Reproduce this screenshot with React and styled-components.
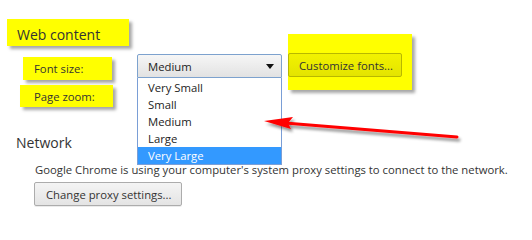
import React from "react";
import styled, { createGlobalStyle } from "styled-components";

const Global = createGlobalStyle`
  html, body { margin: 0; padding: 0; background: #fff; }
  body { font-family: "Open Sans", "Noto Sans", sans-serif; color: #303030; }
`;

const Page = styled.div`
  position: relative;
  width: 532px;
  height: 223px;
  overflow: hidden;
  padding-top: 19px;
  box-sizing: border-box;
`;

const Highlight = styled.div`
  background: #ffff00;
  box-shadow: 3px 3px 3px rgba(0, 0, 0, 0.35);
  box-sizing: border-box;
`;

const TitleBox = styled(Highlight)`
  margin-left: 7px;
  width: 122px;
  height: 27px;
  display: flex;
  align-items: center;
  padding: 3px 0 0 10px;
  font-size: 14px;
  color: #333;
`;

const Row = styled.div`
  display: flex;
  align-items: flex-start;
  height: ${(p) => p.$h}px;
  margin-top: ${(p) => p.$mt || 0}px;
`;

const LabelBox = styled(Highlight)`
  margin-left: ${(p) => p.$ml}px;
  margin-top: ${(p) => p.$mt || 0}px;
  width: ${(p) => p.$w}px;
  height: ${(p) => p.$h}px;
  padding-left: ${(p) => p.$pl}px;
  display: flex;
  align-items: center;
  font-size: 11.3px;
  color: #333;
`;

const SelectWrap = styled.div`
  position: relative;
  margin-left: ${(p) => p.$ml}px;
  width: 145px;
`;

const Select = styled.div`
  height: 24px;
  box-sizing: border-box;
  border: 1px solid #7da2ce;
  border-radius: 2px 2px 0 0;
  background: linear-gradient(#f6f6f6, #e2e2e2);
  display: flex;
  align-items: center;
  justify-content: space-between;
  padding: 0 7px 0 10px;
  font-size: 11.3px;
  color: #222;
`;

const Caret = styled.span`
  width: 0;
  height: 0;
  border-left: 4px solid transparent;
  border-right: 4px solid transparent;
  border-top: 5px solid #111;
`;

const List = styled.ul`
  position: absolute;
  left: 0;
  top: 24px;
  width: 145px;
  box-sizing: border-box;
  margin: 0;
  padding: 0;
  list-style: none;
  background: #fff;
  border: 1px solid #7a9ed6;
  border-top: none;
  z-index: 2;
`;

const Item = styled.li`
  height: 17px;
  line-height: 17px;
  padding-left: 10px;
  font-size: 11.3px;
  color: ${(p) => (p.$active ? "#fff" : "#222")};
  background: ${(p) => (p.$active ? "#3399ff" : "transparent")};
  margin-top: ${(p) => (p.$first ? 1 : 0)}px;
`;

const CustomizeBox = styled(Highlight)`
  margin-left: 6px;
  margin-top: -20px;
  width: 124px;
  height: 56px;
  padding-top: 19px;
`;

const YellowButton = styled.div`
  width: 114px;
  height: 24px;
  box-sizing: border-box;
  border: 1px solid #b8b800;
  border-radius: 2px;
  background: linear-gradient(#f2f200, #e4e400);
  display: flex;
  align-items: center;
  padding-left: 10px;
  font-size: 11.3px;
  color: #333;
`;

const SectionTitle = styled.div`
  margin: 27px 0 0 16px;
  font-size: 14px;
  line-height: 18px;
  color: #333;
`;

const Description = styled.div`
  margin: 10px 0 0 35px;
  font-size: 11.3px;
  line-height: 16px;
  white-space: nowrap;
  color: #333;
`;

const Button = styled.div`
  margin: 4px 0 0 34px;
  width: 148px;
  height: 24px;
  box-sizing: border-box;
  border: 1px solid #acacac;
  border-radius: 2px;
  background: linear-gradient(#f4f4f4, #e4e4e4);
  box-shadow: 0 1px 0 rgba(0, 0, 0, 0.08);
  display: flex;
  align-items: center;
  padding-left: 11px;
  font-size: 11.3px;
  color: #333;
`;

const ArrowSvg = styled.svg`
  position: absolute;
  left: 255px;
  top: 108px;
  z-index: 3;
  overflow: visible;
`;

const options = ["Very Small", "Small", "Medium", "Large", "Very Large"];

export default function App() {
  return (
    <>
      <Global />
      <Page>
        <TitleBox>Web content</TitleBox>
        <Row $h={31} $mt={8}>
          <LabelBox $ml={23} $mt={3} $w={89} $h={23} $pl={11}>
            Font size:
          </LabelBox>
          <SelectWrap $ml={25}>
            <Select>
              Medium
              <Caret />
            </Select>
            <List>
              {options.map((o, i) => (
                <Item key={o} $first={i === 0} $active={o === "Very Large"}>
                  {o}
                </Item>
              ))}
            </List>
          </SelectWrap>
          <CustomizeBox>
            <YellowButton>Customize fonts...</YellowButton>
          </CustomizeBox>
        </Row>
        <Row $h={22} $mt={0}>
          <LabelBox $ml={20} $w={93} $h={22} $pl={14}>
            Page zoom:
          </LabelBox>
        </Row>
        <SectionTitle>Network</SectionTitle>
        <Description>
          Google Chrome is using your computer's system proxy settings to connect to the network.
        </Description>
        <Button>Change proxy settings...</Button>
        <ArrowSvg width="210" height="40" viewBox="0 0 210 40">
          <defs>
            <filter id="sh" x="-10%" y="-50%" width="120%" height="200%">
              <feGaussianBlur in="SourceAlpha" stdDeviation="1.5" />
              <feOffset dx="2" dy="3" result="b" />
              <feComponentTransfer>
                <feFuncA type="linear" slope="0.45" />
              </feComponentTransfer>
              <feMerge>
                <feMergeNode />
                <feMergeNode in="SourceGraphic" />
              </feMerge>
            </filter>
          </defs>
          <g filter="url(#sh)">
            <line x1="30" y1="15" x2="202" y2="29" stroke="#ff0000" strokeWidth="3" strokeLinecap="round" />
            <polygon points="9,13 38,9 33,15 36,21" fill="#ff0000" />
          </g>
        </ArrowSvg>
      </Page>
    </>
  );
}
